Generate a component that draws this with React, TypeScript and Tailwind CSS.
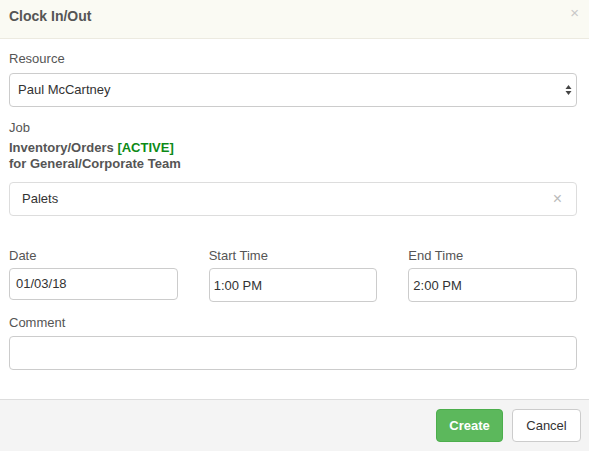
import React from "react";

export default function App() {
  const font = { fontFamily: '"Liberation Sans", Arial, sans-serif' };
  return (
    <div className="w-[589px] h-[451px] bg-white flex flex-col overflow-hidden text-[13px] text-[#555]" style={font}>
      <div className="h-[39px] shrink-0 bg-[#fafaf3] border-b border-[#eceae0] flex items-center justify-between pl-[9px] pr-[10px]">
        <div className="font-bold text-[14px] text-[#555] mt-[-6px]">Clock In/Out</div>
        <div className="text-[#c8c8c8] text-[15px] leading-none mt-[-14px]">×</div>
      </div>
      <div className="flex-1 flex flex-col pl-[9px] pr-[12px] pt-[12px]">
        <div className="text-[13px] leading-[16px]">Resource</div>
        <div className="mt-[6px] h-[34px] border border-[#ccc] rounded-[4px] flex items-center justify-between pl-[8px] pr-[4px] text-[#333]">
          <span>Paul McCartney</span>
          <svg width="7" height="12" viewBox="0 0 7 12">
            <path d="M3.5 1 L6.5 5 H0.5 Z" fill="#444" />
            <path d="M3.5 11 L6.5 7 H0.5 Z" fill="#444" />
          </svg>
        </div>
        <div className="mt-[13px] leading-[16px]">Job</div>
        <div className="mt-[4px] font-bold leading-[16px]">
          Inventory/Orders <span className="text-[#0d8a16]">[ACTIVE]</span>
        </div>
        <div className="font-bold leading-[16px]">for General/Corporate Team</div>
        <div className="mt-[10px] h-[34px] border border-[#ddd] rounded-[4px] flex items-center justify-between pl-[12px] pr-[14px] text-[#333]">
          <span>Palets</span>
          <span className="text-[#bbb] text-[16px] leading-none">×</span>
        </div>
        <div className="mt-[32px] grid grid-cols-3 gap-x-[31px]">
          <div className="flex flex-col">
            <div className="leading-[16px]">Date</div>
            <div className="mt-[4px] h-[32px] border border-[#ccc] rounded-[4px] flex items-center pl-[6px] text-[#333]">01/03/18</div>
          </div>
          <div className="flex flex-col">
            <div className="leading-[16px]">Start Time</div>
            <div className="mt-[4px] h-[34px] border border-[#ccc] rounded-[4px] flex items-center pl-[4px] pt-[2px] text-[#333]">1:00 PM</div>
          </div>
          <div className="flex flex-col">
            <div className="leading-[16px]">End Time</div>
            <div className="mt-[4px] h-[34px] border border-[#ccc] rounded-[4px] flex items-center pl-[4px] pt-[2px] text-[#333]">2:00 PM</div>
          </div>
        </div>
        <div className="mt-[13px] leading-[16px]">Comment</div>
        <div className="mt-[5px] h-[34px] border border-[#ccc] rounded-[4px]" />
      </div>
      <div className="h-[52px] shrink-0 bg-[#f4f4f4] border-t border-[#ddd] flex items-center justify-end gap-[9px] pr-[8px]">
        <button className="h-[33px] w-[67px] rounded-[4px] bg-[#5cb85c] border border-[#4cae4c] text-white font-bold text-[13px]">Create</button>
        <button className="h-[33px] w-[69px] rounded-[4px] bg-white border border-[#ccc] text-[#333] text-[13px]">Cancel</button>
      </div>
    </div>
  );
}
